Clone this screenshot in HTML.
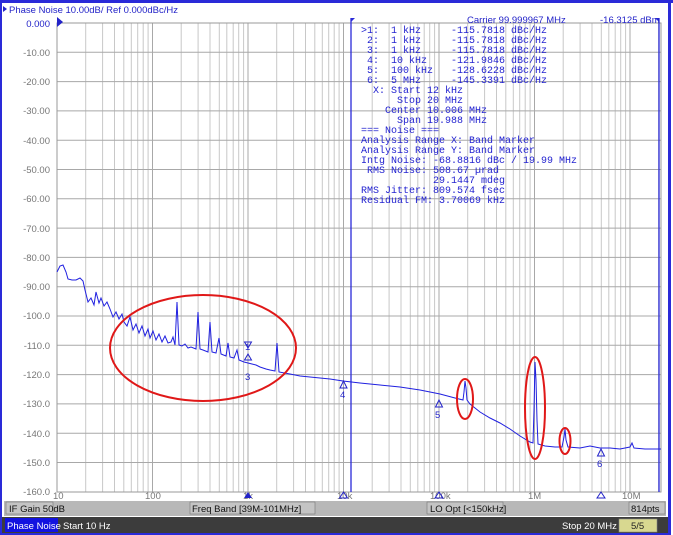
<!DOCTYPE html>
<html><head><meta charset="utf-8"><style>
body{margin:0;width:673px;height:535px;overflow:hidden;background:#fff;font-family:"Liberation Sans",sans-serif}
svg{position:absolute;left:0;top:0}
.mono{font-family:"Liberation Mono",monospace;font-size:10px;fill:#2323d0}
.ax{font-size:9.5px;fill:#777}
.sb{font-size:9.5px;fill:#111}
</style></head><body>
<svg width="673" height="535" viewBox="0 0 673 535">
<rect x="0" y="0" width="673" height="535" fill="#fff"/>
<rect x="0" y="0" width="673" height="3" fill="#2a2ad8"/>
<rect x="0" y="0" width="2" height="535" fill="#2a2ad8"/>
<rect x="668" y="0" width="3" height="535" fill="#2a2ad8"/>
<text x="9" y="13" font-size="9.5" fill="#2323c8">Phase Noise 10.00dB/ Ref 0.000dBc/Hz</text>
<path d="M3 6l4 3l-4 3z" fill="#2323c8"/>
<path stroke="#c8c8c8" stroke-width="1" fill="none" d="M85.7 23V492M102.6 23V492M114.5 23V492M123.8 23V492M131.3 23V492M137.7 23V492M143.2 23V492M148.1 23V492M181.2 23V492M198.1 23V492M210 23V492M219.3 23V492M226.8 23V492M233.2 23V492M238.7 23V492M243.6 23V492M276.7 23V492M293.6 23V492M305.5 23V492M314.8 23V492M322.3 23V492M328.7 23V492M334.2 23V492M339.1 23V492M372.2 23V492M389.1 23V492M401 23V492M410.3 23V492M417.8 23V492M424.2 23V492M429.7 23V492M434.6 23V492M467.7 23V492M484.6 23V492M496.5 23V492M505.8 23V492M513.3 23V492M519.7 23V492M525.2 23V492M530.1 23V492M563.2 23V492M580.1 23V492M592 23V492M601.3 23V492M608.8 23V492M615.2 23V492M620.7 23V492M625.6 23V492M658.7 23V492"/>
<path stroke="#a8a8a8" stroke-width="1" fill="none" d="M152.5 23V492M248 23V492M343.5 23V492M439 23V492M534.5 23V492M630 23V492M57 52.3H661M57 81.6H661M57 110.9H661M57 140.2H661M57 169.5H661M57 198.8H661M57 228.1H661M57 257.4H661M57 286.7H661M57 316H661M57 345.3H661M57 374.6H661M57 403.9H661M57 433.2H661M57 462.5H661"/>
<rect x="57" y="23" width="604" height="469" fill="none" stroke="#999" stroke-width="1"/>
<path d="M57 17l6 5l-6 5z" fill="#2323c8"/>
<g class="ax" text-anchor="end">
<text x="50" y="27" style="fill:#2323c8">0.000</text>
<text x="50" y="56">-10.00</text><text x="50" y="85">-20.00</text><text x="50" y="114">-30.00</text>
<text x="50" y="144">-40.00</text><text x="50" y="173">-50.00</text><text x="50" y="202">-60.00</text>
<text x="50" y="232">-70.00</text><text x="50" y="261">-80.00</text><text x="50" y="290">-90.00</text>
<text x="50" y="319">-100.0</text><text x="50" y="349">-110.0</text><text x="50" y="378">-120.0</text>
<text x="50" y="407">-130.0</text><text x="50" y="437">-140.0</text><text x="50" y="466">-150.0</text>
<text x="50" y="495">-160.0</text>
</g>
<g class="ax">
<text x="53" y="499">10</text><text x="145" y="499">100</text><text x="243" y="499">1k</text>
<text x="337" y="499">10k</text><text x="430" y="499">100k</text><text x="528" y="499">1M</text><text x="622" y="499">10M</text>
</g>
<path d="M248 492l-4 6h8z" fill="#2323c8"/>
<path d="M343.5 492l-4 6h8zM439 492l-4 6h8zM601 492l-4 6h8z" fill="none" stroke="#2323c8"/>
<path d="M351 18V492M659 18V492" stroke="#2a2ad8" stroke-width="1.3"/>
<path d="M351 18l4 0l-4 4z M659 18l-4 0l4 4z" fill="#2a2ad8"/>
<text x="467" y="23" font-size="9.5" fill="#2323c8">Carrier 99.999967 MHz</text>
<text x="600" y="23" font-size="9.5" fill="#2323c8">-16.3125 dBm</text>
<g class="mono">
<text x="361" y="33" xml:space="preserve">&gt;1:  1 kHz     -115.7818 dBc/Hz</text>
<text x="361" y="43" xml:space="preserve"> 2:  1 kHz     -115.7818 dBc/Hz</text>
<text x="361" y="53" xml:space="preserve"> 3:  1 kHz     -115.7818 dBc/Hz</text>
<text x="361" y="63" xml:space="preserve"> 4:  10 kHz    -121.9846 dBc/Hz</text>
<text x="361" y="73" xml:space="preserve"> 5:  100 kHz   -128.6228 dBc/Hz</text>
<text x="361" y="83" xml:space="preserve"> 6:  5 MHz     -145.3391 dBc/Hz</text>
<text x="361" y="93" xml:space="preserve">  X: Start 12 kHz</text>
<text x="361" y="103" xml:space="preserve">      Stop 20 MHz</text>
<text x="361" y="113" xml:space="preserve">    Center 10.006 MHz</text>
<text x="361" y="123" xml:space="preserve">      Span 19.988 MHz</text>
<text x="361" y="133" xml:space="preserve">=== Noise ===</text>
<text x="361" y="143">Analysis Range X: Band Marker</text>
<text x="361" y="153">Analysis Range Y: Band Marker</text>
<text x="361" y="163">Intg Noise: -68.8816 dBc / 19.99 MHz</text>
<text x="361" y="173" xml:space="preserve"> RMS Noise: 508.67 µrad</text>
<text x="361" y="183" xml:space="preserve">            29.1447 mdeg</text>
<text x="361" y="193">RMS Jitter: 809.574 fsec</text>
<text x="361" y="203">Residual FM: 3.70069 kHz</text>
</g>
<polyline fill="none" stroke="#2020e0" stroke-width="1" points="57,272 60,266 63,265 66,272 68,279 72,280 76,280 80,278 83,281 85,290 88,302 91,298 94,305 96,292 99,303 101,298 104,306 107,302 110,309 113,317 116,312 119,319 122,314 124,322 127,326 130,317 133,330 136,324 139,333 142,326 145,336 148,329 150,338 153,331 156,340 159,334 162,342 165,336 168,343 171,342 173,337 175,345 177,302 179,345 182,346 185,344 188,348 191,347 196,349 198,312 200,349 203,350 208,352 210,322 212,352 216,353 219,338 221,354 226,356 228,343 230,357 234,358 237,350 239,360 244,362 248,363 252,364 256,365 260,367 266,369 270,370 275,371 277,343 279,372 290,374 300,376 310,377 320,378 330,379 343,381 360,383 380,385 400,387 420,390 440,394 455,398 463,400 464,392 465,381 466,388 467,400 470,404 480,412 490,418 500,423 510,429 520,436 530,442 533,443 534,410 535,362 536,380 537,420 538,444 545,446 555,447 562,447 564,437 565,429 566,440 568,447 580,448 590,446 600,448 610,448 620,449 630,447 632,443 634,448 645,449 661,449"/>
<g fill="none" stroke="#2323c8" stroke-width="1">
<path d="M248 348l-3.5 -6h7z"/><path d="M248 354l-3.5 6h7z"/>
<path d="M343.5 381l-3.5 7h7z"/>
<path d="M439 400l-3.5 7h7z"/>
<path d="M601 449l-3.5 7h7z"/>
</g>
<g font-size="9.5" fill="#2323c8">
<text x="245" y="350">1</text><text x="245" y="380">3</text><text x="340" y="398">4</text><text x="435" y="418">5</text><text x="597" y="467">6</text>
</g>
<g fill="none" stroke="#e01818" stroke-width="2">
<ellipse cx="203" cy="348" rx="93" ry="53"/>
<ellipse cx="465" cy="399" rx="8" ry="20"/>
<ellipse cx="535" cy="408" rx="10" ry="51"/>
<ellipse cx="565" cy="441" rx="5.5" ry="13"/>
</g>
<rect x="4" y="501" width="662" height="15" fill="#b8b8b8"/>
<rect x="6" y="502" width="47" height="12" fill="#c4c4c4" stroke="#777" stroke-width="0.6"/>
<rect x="190" y="502" width="125" height="12" fill="#c4c4c4" stroke="#777" stroke-width="0.6"/>
<rect x="427" y="502" width="76" height="12" fill="#c4c4c4" stroke="#777" stroke-width="0.6"/>
<rect x="629" y="502" width="36" height="12" fill="#c4c4c4" stroke="#777" stroke-width="0.6"/>
<g class="sb"><text x="9" y="512">IF Gain 50dB</text><text x="192" y="512">Freq Band [39M-101MHz]</text><text x="430" y="512">LO Opt [&lt;150kHz]</text><text x="631" y="512">814pts</text></g>
<rect x="2" y="517" width="666" height="16" fill="#3c3c3c"/>
<rect x="5" y="518" width="53" height="14" fill="#1212e0"/>
<text x="7" y="529" font-size="9.5" fill="#fff">Phase Noise</text>
<text x="63" y="529" font-size="9.5" fill="#fff">Start 10 Hz</text>
<text x="562" y="529" font-size="9.5" fill="#fff">Stop 20 MHz</text>
<rect x="619" y="519" width="38" height="13" fill="#d8d890" stroke="#888" stroke-width="0.6"/>
<text x="631" y="529" font-size="9.5" fill="#222">5/5</text>
<rect x="2" y="533" width="669" height="2" fill="#2a2ad8"/>
</svg>
</body></html>
